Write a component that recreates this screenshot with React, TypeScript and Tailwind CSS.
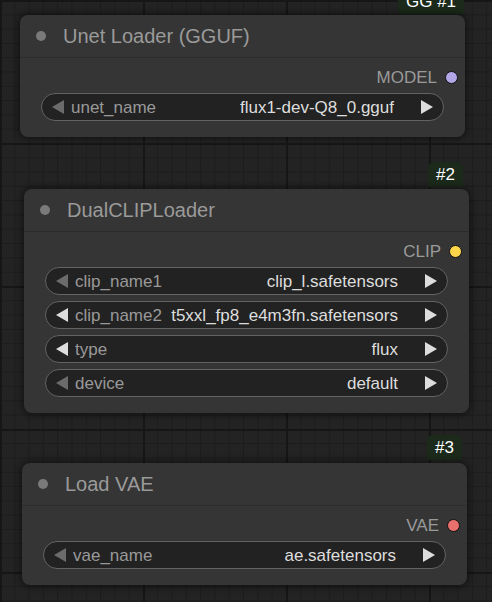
import React from 'react';

type Widget = { name: string; value: string; first?: boolean };

type NodeProps = {
  title: string;
  output: string;
  dot: string;
  widgets: Widget[];
  pos: string;
};

function LeftArrow({ dim }: { dim?: boolean }) {
  return (
    <svg width="12" height="14" viewBox="0 0 12 14" className="shrink-0">
      <polygon points="12,0 12,14 0,7" fill={dim ? '#6b6b6b' : '#dddddd'} />
    </svg>
  );
}

function RightArrow() {
  return (
    <svg width="12" height="14" viewBox="0 0 12 14" className="shrink-0">
      <polygon points="0,0 0,14 12,7" fill="#dddddd" />
    </svg>
  );
}

function ComboWidget({ name, value, first }: Widget) {
  return (
    <div className="flex h-[28px] items-center rounded-full border border-[#636363] bg-[#222222] pl-[10px] pr-[10px] text-[17px] leading-none">
      <LeftArrow dim={first} />
      <span className="ml-[7px] whitespace-nowrap text-[#999999]">{name}</span>
      <span className="ml-auto mr-[27px] whitespace-nowrap pl-[8px] text-[#dddddd]">{value}</span>
      <RightArrow />
    </div>
  );
}

function GraphNode({ title, output, dot, widgets, pos }: NodeProps) {
  return (
    <div className={`absolute w-[445px] rounded-[8px] bg-[#353535] shadow-[0_0_6px_2px_rgba(0,0,0,0.45)] ${pos}`}>
      {/* title */}
      <div className="flex h-[43px] items-center border-b border-[#2c2c2c] pl-[16px]">
        <div className="h-[10px] w-[10px] rounded-full bg-[#7a7a7a]" />
        <span className="ml-[17px] text-[20px] leading-none text-[#9a9a9a]">{title}</span>
      </div>
      {/* body */}
      <div className="px-[21px] pb-[16px] pt-[9px]">
        <div className="-mr-[14px] flex h-[20px] items-center justify-end">
          <span className="text-[17px] leading-none text-[#9a9a9a]">{output}</span>
          <div className={`ml-[8px] h-[13px] w-[13px] rounded-full border-[1.5px] border-[#111111] ${dot}`} />
        </div>
        <div className="mt-[6px] flex flex-col gap-[6px]">
          {widgets.map((w) => (
            <ComboWidget key={w.name} {...w} />
          ))}
        </div>
      </div>
    </div>
  );
}

function Badge({ text, pos }: { text: string; pos: string }) {
  return (
    <div className={`absolute flex h-[25px] items-center rounded-t-[6px] bg-[#1b2a1b] px-[8px] text-[17px] leading-none text-white ${pos}`}>
      {text}
    </div>
  );
}

export default function App() {
  return (
    <div
      className="relative h-[602px] w-[492px] overflow-hidden bg-[#232323] bg-[linear-gradient(to_right,#161616_2px,transparent_2px),linear-gradient(to_bottom,#161616_2px,transparent_2px),linear-gradient(to_right,#1c1c1c_1px,transparent_1px),linear-gradient(to_bottom,#1c1c1c_1px,transparent_1px)] bg-[size:143px_143px,143px_143px,14.3px_14.3px,14.3px_14.3px] font-['Liberation_Sans',Arial,sans-serif]"
    >
      <Badge text="GG #1" pos="left-[398px] top-[-11px]" />
      <GraphNode
        pos="left-[20px] top-[15px]"
        title="Unet Loader (GGUF)"
        output="MODEL"
        dot="bg-[#b3a6e6]"
        widgets={[{ name: 'unet_name', value: 'flux1-dev-Q8_0.gguf', first: true }]}
      />

      <Badge text="#2" pos="left-[428px] top-[162px]" />
      <GraphNode
        pos="left-[24px] top-[189px]"
        title="DualCLIPLoader"
        output="CLIP"
        dot="bg-[#ffd64a]"
        widgets={[
          { name: 'clip_name1', value: 'clip_l.safetensors', first: true },
          { name: 'clip_name2', value: 't5xxl_fp8_e4m3fn.safetensors' },
          { name: 'type', value: 'flux' },
          { name: 'device', value: 'default', first: true },
        ]}
      />

      <Badge text="#3" pos="left-[427px] top-[435px]" />
      <GraphNode
        pos="left-[22px] top-[463px]"
        title="Load VAE"
        output="VAE"
        dot="bg-[#e8706c]"
        widgets={[{ name: 'vae_name', value: 'ae.safetensors', first: true }]}
      />
    </div>
  );
}
